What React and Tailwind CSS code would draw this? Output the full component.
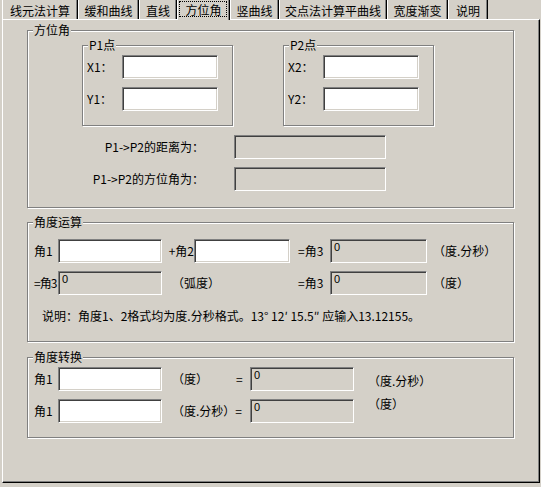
import React from 'react';

const tabs = [
  { label: '线元法计算', w: 'w-[76px]' },
  { label: '缓和曲线', w: 'w-[61px]' },
  { label: '直线', w: 'w-[38px]' },
  { label: '方位角', w: 'w-[53px]', active: true },
  { label: '竖曲线', w: 'w-[49px]' },
  { label: '交点法计算平曲线', w: 'w-[108px]' },
  { label: '宽度渐变', w: 'w-[61px]' },
  { label: '说明', w: 'w-[40px]' },
];

// sunken win32 edit box
const Edit = ({ w, disabled, value }) => (
  <div
    className={`h-[24px] ${w} shrink-0 border border-t-[#808080] border-l-[#808080] border-b-white border-r-white shadow-[inset_1px_1px_0_#404040,inset_-1px_-1px_0_#d4d0c8] ${
      disabled ? 'bg-[#d4d0c8]' : 'bg-white'
    }`}
  >
    {value && (
      <span className="block pl-[3px] pt-[2px] text-[11px] leading-[11px] font-['Liberation_Sans',sans-serif]">{value}</span>
    )}
  </div>
);

const Group = ({ title, className, children }) => (
  <div className={`relative border border-[#808080] shadow-[inset_1px_1px_0_#fff,1px_1px_0_#fff] ${className}`}>
    <span className="absolute -top-[8px] left-[5px] px-[1px] bg-[#d4d0c8] leading-[14px]">{title}</span>
    {children}
  </div>
);

const PointBox = ({ n }) => (
  <Group title={`P${n}点`} className="w-[151px] h-[81px] pt-[9px] flex flex-col gap-[8px]">
    {['X', 'Y'].map((k) => (
      <div key={k} className="flex items-center pl-[4px]">
        <span className="w-[35px]">{k}{n}：</span>
        <Edit w="w-[96px]" />
      </div>
    ))}
  </Group>
);

export default function App() {
  return (
    <div className="w-[541px] h-[487px] overflow-hidden bg-[#d4d0c8] text-black text-[12px] leading-[14px] font-['Noto_Sans_CJK_SC',sans-serif]">
      {/* tab strip */}
      <div className="flex h-[19px] pl-[2px]">
        {tabs.map((t) =>
          t.active ? (
            <div
              key={t.label}
              className={`relative z-10 h-[20px] ${t.w} flex items-center justify-center pb-[1px] bg-[#d4d0c8] border-l border-l-white border-r border-r-black shadow-[inset_-1px_0_0_#808080]`}
            >
              <span className="absolute left-[1px] right-[2px] top-[1px] bottom-[3px] border border-dotted border-black"></span>
              {t.label}
            </div>
          ) : (
            <div
              key={t.label}
              className={`h-[19px] ${t.w} flex items-center justify-center pt-[2px] border-l border-l-white border-r border-r-black shadow-[inset_-1px_0_0_#808080]`}
            >
              {t.label}
            </div>
          )
        )}
      </div>

      {/* tab page */}
      <div className="ml-[2px] w-[538px] h-[464px] border border-t-white border-l-white border-r-black border-b-black shadow-[inset_-1px_-1px_0_#808080] pl-[24px] pt-[10px] flex flex-col">
        <Group title="方位角" className="w-[487px] h-[178px]">
          <div className="flex gap-[50px] mt-[14px] ml-[54px]">
            <PointBox n={1} />
            <PointBox n={2} />
          </div>
          <div className="mt-[9px] flex flex-col gap-[8px]">
            <div className="flex items-center">
              <span className="w-[176px] text-right">P1-&gt;P2的距离为：</span>
              <div className="ml-[30px]">
                <Edit w="w-[152px]" disabled />
              </div>
            </div>
            <div className="flex items-center">
              <span className="w-[176px] text-right">P1-&gt;P2的方位角为：</span>
              <div className="ml-[30px]">
                <Edit w="w-[152px]" disabled />
              </div>
            </div>
          </div>
        </Group>

        <Group title="角度运算" className="mt-[14px] w-[487px] h-[120px] pt-[16px] pl-[6px]">
          <div className="flex items-center">
            <span className="w-[24px]">角1</span>
            <Edit w="w-[104px]" />
            <span className="w-[32px] text-right whitespace-nowrap">+角2</span>
            <Edit w="w-[96px]" />
            <span className="w-[40px] pl-[8px] whitespace-nowrap">=角3</span>
            <Edit w="w-[97px]" disabled value="0" />
            <span className="pl-[6px]">（度.分秒）</span>
          </div>
          <div className="flex items-center mt-[8px]">
            <span className="w-[24px] whitespace-nowrap tracking-[-1px]">=角3</span>
            <Edit w="w-[104px]" disabled value="0" />
            <span className="w-[136px] pl-[10px]">（弧度）</span>
            <span className="w-[32px] whitespace-nowrap">=角3</span>
            <Edit w="w-[97px]" disabled value="0" />
            <span className="pl-[6px]">（度）</span>
          </div>
          <p className="mt-[14px] pl-[8px]">说明：角度1、2格式均为度.分秒格式。13° 12′ 15.5″ 应输入13.12155。</p>
        </Group>

        <Group title="角度转换" className="mt-[15px] w-[487px] h-[81px] pt-[9px] pl-[6px]">
          <div className="flex items-center">
            <span className="w-[24px]">角1</span>
            <Edit w="w-[104px]" />
            <span className="w-[74px] pl-[10px]">（度）</span>
            <span className="w-[14px]">=</span>
            <Edit w="w-[104px]" disabled value="0" />
            <span className="pl-[14px] mt-[4px]">（度.分秒）</span>
          </div>
          <div className="flex items-center mt-[8px]">
            <span className="w-[24px]">角1</span>
            <Edit w="w-[104px]" />
            <span className="w-[88px] pl-[10px] whitespace-nowrap">（度.分秒）=</span>
            <Edit w="w-[104px]" disabled value="0" />
            <span className="pl-[14px] self-start -mt-[2px]">（度）</span>
          </div>
        </Group>
      </div>
    </div>
  );
}
